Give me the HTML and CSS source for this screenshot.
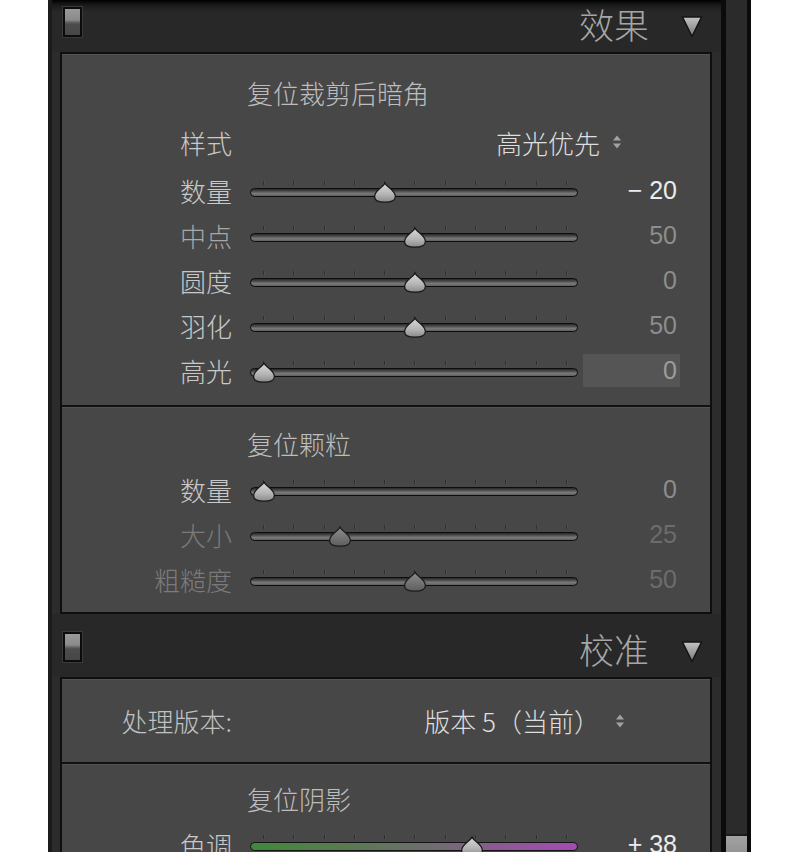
FILE: index.html
```html
<!DOCTYPE html>
<html lang="zh-CN">
<head>
<meta charset="utf-8">
<title>效果</title>
<link rel="stylesheet" href="styles.css">
</head>
<body>
<svg class="sprite" width="0" height="0" aria-hidden="true">
  <defs>
    <linearGradient id="gThumb" x1="0" y1="0" x2="0" y2="1">
      <stop offset="0" stop-color="#dadada"/>
      <stop offset="0.6" stop-color="#b4b4b4"/>
      <stop offset="1" stop-color="#8a8a8a"/>
    </linearGradient>
    <linearGradient id="gThumbDim" x1="0" y1="0" x2="0" y2="1">
      <stop offset="0" stop-color="#8e8e8e"/>
      <stop offset="1" stop-color="#5e5e5e"/>
    </linearGradient>
    <linearGradient id="gTri" x1="0" y1="0" x2="0" y2="1">
      <stop offset="0" stop-color="#c4c4c4"/>
      <stop offset="1" stop-color="#787878"/>
    </linearGradient>
    <symbol id="thumb" viewBox="0 0 24 21">
      <path d="M12 0.9 C13.6 5 22.4 8.6 22.4 14.4 C22.4 18.6 19 20.1 12 20.1 C5 20.1 1.6 18.6 1.6 14.4 C1.6 8.6 10.4 5 12 0.9 Z" fill="url(#gThumb)" stroke="#181818" stroke-width="1.3"/>
    </symbol>
    <symbol id="thumbDim" viewBox="0 0 24 21">
      <path d="M12 0.9 C13.6 5 22.4 8.6 22.4 14.4 C22.4 18.6 19 20.1 12 20.1 C5 20.1 1.6 18.6 1.6 14.4 C1.6 8.6 10.4 5 12 0.9 Z" fill="url(#gThumbDim)" stroke="#1c1c1c" stroke-width="1.3"/>
    </symbol>
    <symbol id="tri" viewBox="0 0 22 23">
      <polygon points="1.5,2 20.5,2 11,21.5" fill="url(#gTri)" stroke="#141414" stroke-width="1.5" stroke-linejoin="round"/>
    </symbol>
    <symbol id="updown" viewBox="0 0 10 16">
      <polygon points="1,6.5 9,6.5 5,1.5" fill="#a2a2a2"/>
      <polygon points="1,9.5 9,9.5 5,14.5" fill="#a2a2a2"/>
    </symbol>
  </defs>
</svg>

<div class="app">
  <div class="main">
    <div class="header header-first">
      <span class="toggle"></span>
      <span class="header-title">效果</span>
      <svg class="disclosure"><use href="#tri"/></svg>
    </div>

    <div class="panel">
      <div class="section section-vignette">
        <div class="section-title">复位裁剪后暗角</div>
        <div class="row select-row">
          <span class="label">样式</span>
          <span class="select">高光优先<svg class="updown"><use href="#updown"/></svg></span>
        </div>
        <div class="row">
          <span class="label">数量</span>
          <div class="slider">
            <div class="ticks"><i></i><i></i><i></i><i></i><i></i><i></i><i></i><i></i><i></i><i></i><i></i></div>
            <div class="track"></div>
            <svg class="thumb" style="--p:0.4"><use href="#thumb"/></svg>
          </div>
          <span class="value bright">− 20</span>
        </div>
        <div class="row">
          <span class="label soft">中点</span>
          <div class="slider">
            <div class="ticks"><i></i><i></i><i></i><i></i><i></i><i></i><i></i><i></i><i></i><i></i><i></i></div>
            <div class="track"></div>
            <svg class="thumb" style="--p:0.5"><use href="#thumb"/></svg>
          </div>
          <span class="value">50</span>
        </div>
        <div class="row">
          <span class="label">圆度</span>
          <div class="slider">
            <div class="ticks"><i></i><i></i><i></i><i></i><i></i><i></i><i></i><i></i><i></i><i></i><i></i></div>
            <div class="track"></div>
            <svg class="thumb" style="--p:0.5"><use href="#thumb"/></svg>
          </div>
          <span class="value">0</span>
        </div>
        <div class="row">
          <span class="label">羽化</span>
          <div class="slider">
            <div class="ticks"><i></i><i></i><i></i><i></i><i></i><i></i><i></i><i></i><i></i><i></i><i></i></div>
            <div class="track"></div>
            <svg class="thumb" style="--p:0.5"><use href="#thumb"/></svg>
          </div>
          <span class="value">50</span>
        </div>
        <div class="row">
          <span class="label">高光</span>
          <div class="slider">
            <div class="ticks"><i></i><i></i><i></i><i></i><i></i><i></i><i></i><i></i><i></i><i></i><i></i></div>
            <div class="track"></div>
            <svg class="thumb" style="--p:0"><use href="#thumb"/></svg>
          </div>
          <span class="value boxed">0</span>
        </div>
      </div>

      <div class="section section-grain">
        <div class="section-title">复位颗粒</div>
        <div class="row">
          <span class="label">数量</span>
          <div class="slider">
            <div class="ticks"><i></i><i></i><i></i><i></i><i></i><i></i><i></i><i></i><i></i><i></i><i></i></div>
            <div class="track"></div>
            <svg class="thumb" style="--p:0"><use href="#thumb"/></svg>
          </div>
          <span class="value">0</span>
        </div>
        <div class="row">
          <span class="label dim">大小</span>
          <div class="slider">
            <div class="ticks"><i></i><i></i><i></i><i></i><i></i><i></i><i></i><i></i><i></i><i></i><i></i></div>
            <div class="track"></div>
            <svg class="thumb" style="--p:0.25"><use href="#thumbDim"/></svg>
          </div>
          <span class="value dim">25</span>
        </div>
        <div class="row">
          <span class="label dim">粗糙度</span>
          <div class="slider">
            <div class="ticks"><i></i><i></i><i></i><i></i><i></i><i></i><i></i><i></i><i></i><i></i><i></i></div>
            <div class="track"></div>
            <svg class="thumb" style="--p:0.5"><use href="#thumbDim"/></svg>
          </div>
          <span class="value dim">50</span>
        </div>
      </div>
    </div>

    <div class="header">
      <span class="toggle"></span>
      <span class="header-title">校准</span>
      <svg class="disclosure"><use href="#tri"/></svg>
    </div>

    <div class="panel">
      <div class="section version-row">
        <span class="label">处理版本:</span>
        <span class="select">版本 5（当前）<svg class="updown"><use href="#updown"/></svg></span>
      </div>
      <div class="section section-shadow">
        <div class="section-title">复位阴影</div>
        <div class="row">
          <span class="label">色调</span>
          <div class="slider">
            <div class="ticks"><i></i><i></i><i></i><i></i><i></i><i></i><i></i><i></i><i></i><i></i><i></i></div>
            <div class="track tint"></div>
            <svg class="thumb" style="--p:0.69"><use href="#thumb"/></svg>
          </div>
          <span class="value bright">+ 38</span>
        </div>
      </div>
    </div>
  </div>

  <div class="scroll">
    <div class="scroll-thumb"></div>
  </div>
</div>
</body>
</html>
```

FILE: styles.css
```css
html, body {
  margin: 0;
  padding: 0;
  height: 852px;
  overflow: hidden;
  background: #ffffff;
}

.sprite {
  display: block;
  width: 0;
  height: 0;
  overflow: hidden;
}

.app {
  display: flex;
  margin-left: 48px;
  width: 703px;
  height: 852px;
  overflow: hidden;
  font-family: "Noto Sans CJK SC", "Noto Sans", sans-serif;
  font-weight: 300;
}

.main {
  width: 669px;
  border-left: 4px solid #1b1b1b;
  background: #2c2c2c;
  overflow: hidden;
}

/* ---------- headers ---------- */
.header {
  height: 63px;
  display: flex;
  align-items: center;
  padding: 0 18px 0 11px;
  background: #282828;
}

.header-first {
  margin-top: -11px;
  background: linear-gradient(to bottom, #000 11px, #1a1a1a 16px, #282828 23px);
}

.toggle {
  width: 15px;
  height: 26px;
  margin-top: 3px;
  border: 2px solid #0c0c0c;
  box-shadow: 0 0 0 1px #3a3a3a;
  background: linear-gradient(to bottom, #9a9a9a 0, #8a8a8a 11px, #666 13px, #4c4c4c 15px, #474747 100%);
}

.header-title {
  margin-left: auto;
  margin-top: 6px;
  font-size: 35px;
  line-height: 36px;
  color: #a6a6a6;
}

.disclosure {
  width: 22px;
  height: 23px;
  margin-left: 32px;
  margin-top: 11px;
}

/* ---------- panels ---------- */
.panel {
  margin: 0 9px 0 8px;
  border: 2px solid #0f0f0f;
  background: #474747;
}

.section {
  box-shadow: inset 0 1px 0 #535353;
}

.section + .section {
  border-top: 2px solid #111;
}

.section-vignette {
  padding: 16px 33px 12px 0;
}

.section-grain {
  padding: 14px 33px 10px 0;
}

.section-shadow {
  padding: 12px 33px 0 0;
}

.section-title {
  height: 46px;
  line-height: 46px;
  padding-left: 185px;
  font-size: 26px;
  color: #bdbdbd;
}

.row {
  display: grid;
  grid-template-columns: 188px 328px 99px;
  height: 45px;
  align-items: center;
}

.label {
  padding-right: 18px;
  text-align: right;
  font-size: 26px;
  line-height: 45px;
  color: #c9c9c9;
  white-space: nowrap;
}

.label.soft { color: #a8a8a8; }
.label.dim { color: #7b7b7b; }

.select-row {
  height: 52px;
}

.select {
  grid-column: 2 / 4;
  justify-self: end;
  display: flex;
  align-items: center;
  margin-right: 55px;
  font-size: 26px;
  color: #dedede;
  white-space: nowrap;
}

.updown {
  width: 10px;
  height: 16px;
  margin-left: 12px;
}

.version-row {
  display: grid;
  grid-template-columns: 188px 1fr;
  align-items: center;
  height: 83px;
  padding-right: 33px;
}

.version-row .label {
  color: #c2c2c2;
}

.version-row .select {
  grid-column: 2;
  margin-right: 52px;
}

.version-row .updown {
  margin-left: 15px;
}

/* ---------- sliders ---------- */
.slider {
  position: relative;
  align-self: stretch;
  display: flex;
  flex-direction: column;
  padding-top: 12px;
  box-sizing: border-box;
}

.ticks {
  display: flex;
  justify-content: space-between;
  align-items: flex-end;
  height: 5px;
  margin: 0 11px 0 13px;
}

.ticks i {
  width: 1px;
  height: 4px;
  background: #2e2e2e;
  box-shadow: 1px 0 0 #4f4f4f;
}

.track {
  height: 9px;
  margin-top: 3px;
  border-radius: 5px;
  box-sizing: border-box;
  border: 1.5px solid #0d0d0d;
  background: linear-gradient(to bottom, #262626 0%, #4a4a4a 30%, #7a7a7a 65%, #5e5e5e 100%);
}

.track.tint {
  background: linear-gradient(to right, #3f8a3a 0%, #5a7a52 30%, #6e6e6e 55%, #8b5a92 75%, #a24cb4 100%);
  border-color: #151515;
}

.thumb {
  position: absolute;
  top: 14px;
  left: calc(2px + 302px * var(--p));
  width: 24px;
  height: 21px;
}

.value {
  justify-self: end;
  font-family: "Liberation Sans", Arial, sans-serif;
  font-weight: 400;
  font-size: 25px;
  line-height: 33px;
  color: #8d8d8d;
  white-space: pre;
}

.value.bright { color: #ececec; }
.value.dim { color: #6c6c6c; }

.value.boxed {
  justify-self: stretch;
  margin: 0 -3px 0 5px;
  padding-right: 3px;
  text-align: right;
  background: #555555;
  color: #9c9c9c;
}

/* ---------- scrollbar ---------- */
.scroll {
  width: 21px;
  border-left: 5px solid #0b0b0b;
  border-right: 4px solid #0b0b0b;
  background: #2b2b2b;
  display: flex;
  flex-direction: column;
  padding-top: 834px;
}

.scroll-thumb {
  height: 40px;
  border-top: 2px solid #1c1c1c;
  background: linear-gradient(to bottom, #a2a2a2, #949494);
}
```
